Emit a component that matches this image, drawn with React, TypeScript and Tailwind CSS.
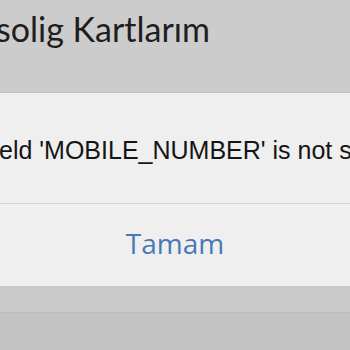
import React from 'react';

export default function App() {
  return (
    <div className="w-[350px] h-[350px] overflow-hidden bg-[#c3c3c3] flex flex-col" style={{ fontFamily: 'Lato, "Open Sans", sans-serif' }}>
      {/* Header */}
      <div className="h-[93px] shrink-0 bg-[#cccccc] border-b border-[#c2c2c2] pt-[9px] overflow-hidden">
        <h1 className="ml-[-4px] whitespace-nowrap text-[34px] leading-[40px] text-[#1e1e1e]">solig Kartlarım</h1>
      </div>

      {/* Alert */}
      <div className="h-[193px] shrink-0 bg-[#efefef] flex flex-col">
        <div className="h-[110px] pt-[43px] overflow-hidden">
          <p
            className="ml-[-1px] whitespace-nowrap text-[25px] leading-[29px] text-[#151515]"
            style={{ fontFamily: '"Liberation Sans", Arial, sans-serif' }}
          >
            eld 'MOBILE_NUMBER' is not set
          </p>
        </div>
        <div className="h-px bg-[#d6d6d6]" />
        <div className="flex-1 flex items-center justify-center pb-[4px]">
          <span className="text-[28px] text-[#4a78b6]" style={{ fontFamily: '"Open Sans", sans-serif' }}>Tamam</span>
        </div>
      </div>

      {/* Below */}
      <div className="h-[27px] shrink-0 bg-[#c9c9c9] border-b border-[#bdbdbd]" />
      <div className="flex-1 bg-[#c3c3c3]" />
    </div>
  );
}
